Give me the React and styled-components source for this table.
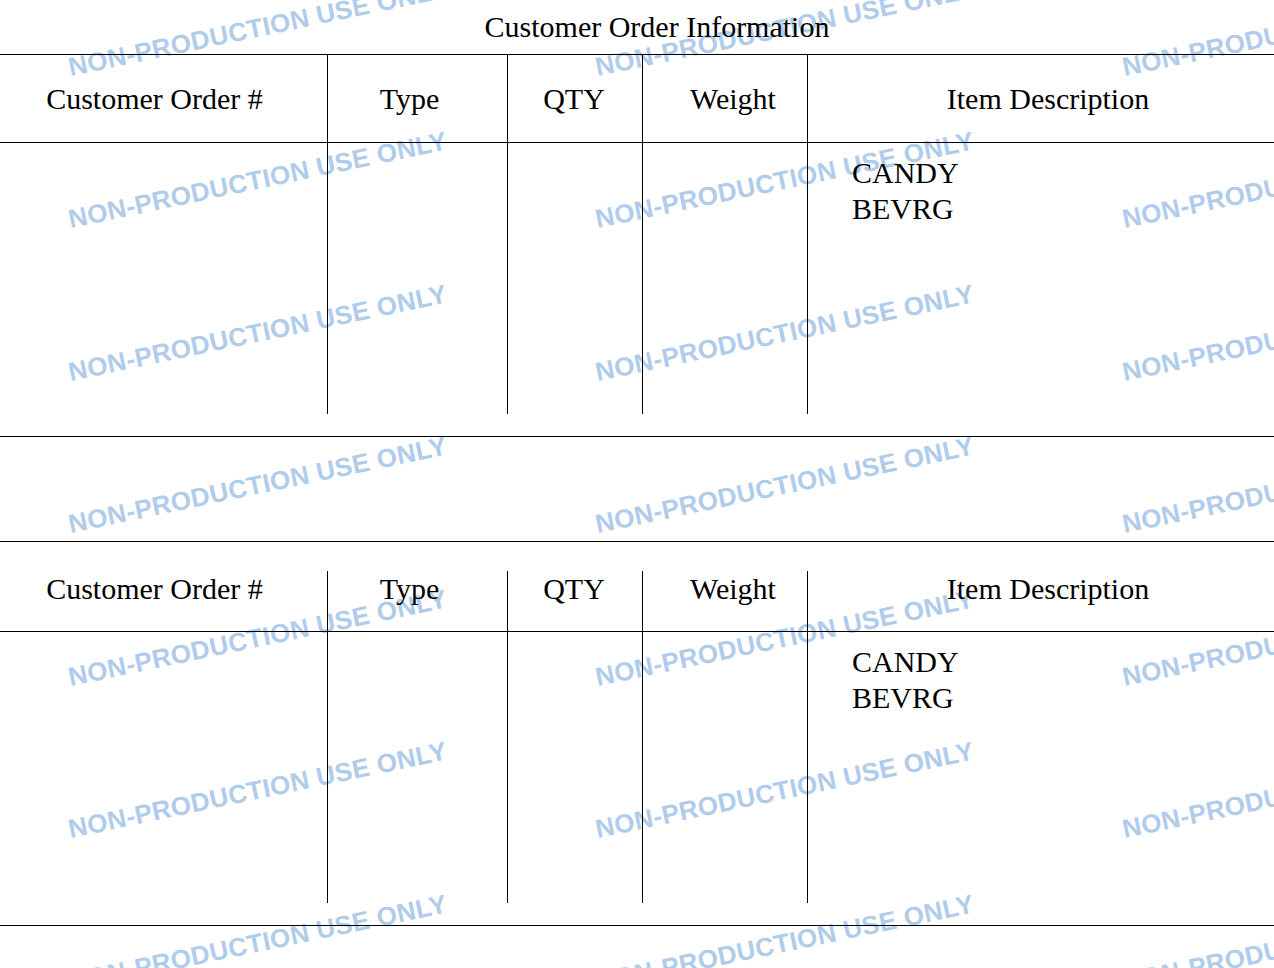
import React from 'react';
import styled, { createGlobalStyle } from 'styled-components';

const GlobalStyle = createGlobalStyle`
  html, body {
    margin: 0;
    padding: 0;
    background: #ffffff;
  }
  body {
    font-family: "Liberation Serif", "Times New Roman", serif;
    color: #000;
  }
`;

const columns = [
  { label: 'Customer Order #', shift: -9 },
  { label: 'Type', shift: -8 },
  { label: 'QTY', shift: -1 },
  { label: 'Weight', shift: 8 },
  { label: 'Item Description', shift: 7 },
];

const orders = [
  { id: 1, items: ['CANDY', 'BEVRG'] },
  { id: 2, items: ['CANDY', 'BEVRG'] },
];

const Page = styled.div`
  position: relative;
  min-height: 968px;
  overflow: hidden;
`;

const WatermarkLayer = styled.div`
  position: absolute;
  inset: 0;
  z-index: 0;
  pointer-events: none;
  overflow: hidden;
`;

const WatermarkGrid = styled.div`
  position: absolute;
  left: 71px;
  top: -75px;
  display: grid;
  grid-template-columns: repeat(3, 527px);
  grid-auto-rows: 152.5px;
`;

const Mark = styled.div`
  display: flex;
  align-items: flex-end;
`;

const MarkText = styled.span`
  display: block;
  font-family: "Liberation Sans", Arial, sans-serif;
  font-weight: 700;
  font-size: 26px;
  letter-spacing: 0.3px;
  line-height: 22px;
  white-space: nowrap;
  color: #b0cceb;
  transform: rotate(-11.8deg);
  transform-origin: left bottom;
`;

const Content = styled.div`
  position: relative;
  z-index: 1;
`;

const Title = styled.h1`
  margin: 0;
  height: 54px;
  padding-top: 9px;
  padding-left: 40px;
  box-sizing: border-box;
  text-align: center;
  font-size: 30px;
  font-weight: 400;
  line-height: 36px;
`;

const Block = styled.section`
  border-top: ${(p) => (p.$ruled ? '1px solid #000' : 'none')};
  padding-top: ${(p) => (p.$ruled ? '0' : '29px')};
`;

const Row = styled.div`
  display: grid;
  grid-template-columns: 327px 180px 135px 165px 1fr;
  box-sizing: border-box;
`;

const HeaderRow = styled(Row)`
  height: ${(p) => (p.$tall ? '88px' : '61px')};
  border-bottom: 1px solid #000;
`;

const BodyRow = styled(Row)`
  height: 271px;
`;

const Cell = styled.div`
  box-sizing: border-box;
  border-left: ${(p) => (p.$first ? 'none' : '1px solid #000')};
  font-size: 30px;
  line-height: 36px;
`;

const HeaderCell = styled(Cell)`
  display: flex;
  justify-content: center;
  align-items: ${(p) => (p.$tall ? 'center' : 'flex-start')};
  padding-left: ${(p) => Math.max(0, p.$shift * 2)}px;
  padding-right: ${(p) => Math.max(0, -p.$shift * 2)}px;
  white-space: nowrap;
`;

const ItemCell = styled(Cell)`
  padding: 12px 0 0 44px;
`;

const Separator = styled.div`
  margin-top: 22px;
  border-bottom: 1px solid #000;
`;

const Band = styled.div`
  height: 104px;
  border-bottom: 1px solid #000;
`;

const Watermark = () => {
  const marks = Array.from({ length: 24 }, (_, i) => i);
  return (
    <WatermarkLayer aria-hidden="true">
      <WatermarkGrid>
        {marks.map((m) => (
          <Mark key={m}>
            <MarkText>NON-PRODUCTION USE ONLY</MarkText>
          </Mark>
        ))}
      </WatermarkGrid>
    </WatermarkLayer>
  );
};

const OrderBlock = ({ order, first }) => (
  <Block $ruled={first}>
    <HeaderRow $tall={first}>
      {columns.map((col, i) => (
        <HeaderCell key={col.label} $first={i === 0} $tall={first} $shift={col.shift}>
          {col.label}
        </HeaderCell>
      ))}
    </HeaderRow>
    <BodyRow>
      <Cell $first />
      <Cell />
      <Cell />
      <Cell />
      <ItemCell>
        {order.items.map((item) => (
          <div key={item}>{item}</div>
        ))}
      </ItemCell>
    </BodyRow>
  </Block>
);

const App = () => (
  <Page>
    <GlobalStyle />
    <Watermark />
    <Content>
      <Title>Customer Order Information</Title>
      <OrderBlock order={orders[0]} first />
      <Separator />
      <Band />
      <OrderBlock order={orders[1]} first={false} />
      <Separator />
    </Content>
  </Page>
);

export default App;
